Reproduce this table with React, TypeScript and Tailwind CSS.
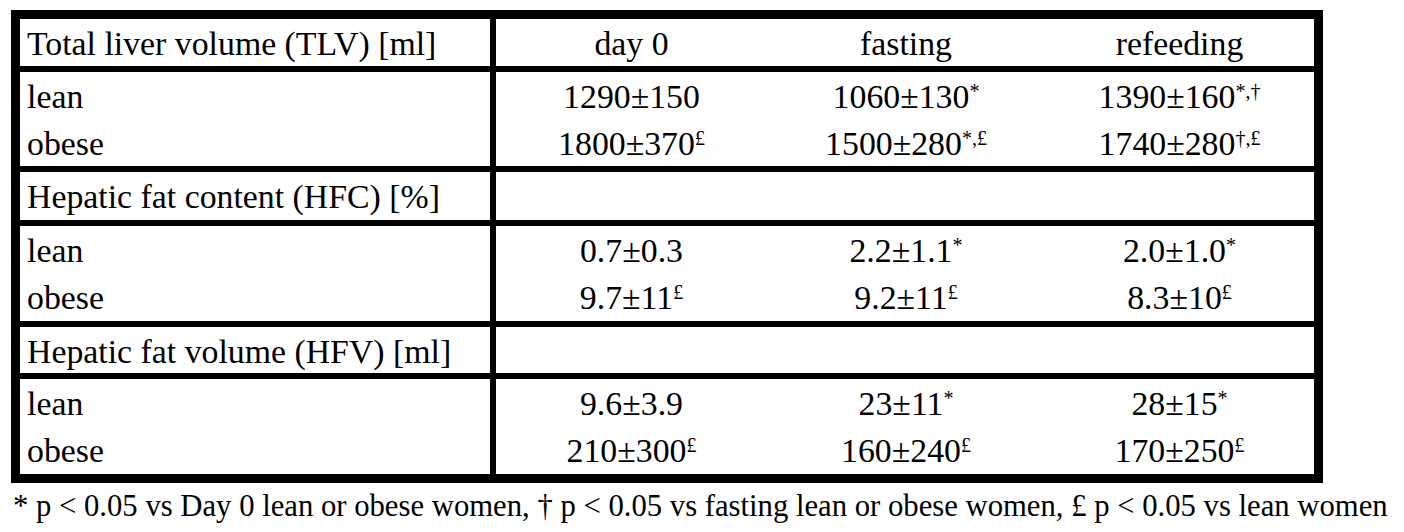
import React from "react";

type Cell = { v: string; s?: string };

const Sup = ({ children }: { children?: React.ReactNode }) =>
  children ? <sup className="text-[20px] top-[-10px]">{children}</sup> : null;

const DataCells = ({ cells }: { cells: Cell[] }) => (
  <div className="grid grid-cols-[271px_278px_269px]">
    {cells.map((c, i) => (
      <div key={i} className="text-center whitespace-nowrap">
        {c.v}
        <Sup>{c.s}</Sup>
      </div>
    ))}
  </div>
);

const Block = ({ lean, obese }: { lean: Cell[]; obese: Cell[] }) => (
  <div className="flex h-[95px] border-t-[6px] border-black box-content">
    <div className="w-[470px] pl-[7px] pt-[1px]">
      <div>lean</div>
      <div>obese</div>
    </div>
    <div className="w-[6px] bg-black" />
    <div className="pt-[1px]">
      <DataCells cells={lean} />
      <DataCells cells={obese} />
    </div>
  </div>
);

const Header = ({ label, h }: { label: string; h: string }) => (
  <div className={`flex border-t-[6px] border-black box-content ${h}`}>
    <div className="w-[470px] pl-[7px] pt-[1px] whitespace-nowrap">{label}</div>
    <div className="w-[6px] bg-black" />
    <div />
  </div>
);

export default function App() {
  return (
    <div
      className="bg-white w-[1404px] h-[532px] text-black overflow-hidden"
      style={{ fontFamily: '"Liberation Serif", "Times New Roman", serif' }}
    >
      <div className="pt-[10px] pl-[11px] text-[33.8px] leading-[47px]">
        <div className="w-[1312px] border-[9px] border-black flex flex-col">
          <div className="flex h-[47px]">
            <div className="w-[470px] pl-[7px] pt-[1px] whitespace-nowrap">
              Total liver volume (TLV) [ml]
            </div>
            <div className="w-[6px] bg-black" />
            <div className="pt-[1px]">
              <DataCells
                cells={[{ v: "day 0" }, { v: "fasting" }, { v: "refeeding" }]}
              />
            </div>
          </div>
          <div className="flex h-[94px] border-t-[6px] border-black box-content">
            <div className="w-[470px] pl-[7px] pt-[1px]">
              <div>lean</div>
              <div>obese</div>
            </div>
            <div className="w-[6px] bg-black" />
            <div className="pt-[1px]">
              <DataCells
                cells={[
                  { v: "1290±150" },
                  { v: "1060±130", s: "*" },
                  { v: "1390±160", s: "*,†" },
                ]}
              />
              <DataCells
                cells={[
                  { v: "1800±370", s: "£" },
                  { v: "1500±280", s: "*,£" },
                  { v: "1740±280", s: "†,£" },
                ]}
              />
            </div>
          </div>
          <Header label="Hepatic fat content (HFC) [%]" h="h-[48px]" />
          <Block
            lean={[
              { v: "0.7±0.3" },
              { v: "2.2±1.1", s: "*" },
              { v: "2.0±1.0", s: "*" },
            ]}
            obese={[
              { v: "9.7±11", s: "£" },
              { v: "9.2±11", s: "£" },
              { v: "8.3±10", s: "£" },
            ]}
          />
          <Header label="Hepatic fat volume (HFV) [ml]" h="h-[46px]" />
          <Block
            lean={[
              { v: "9.6±3.9" },
              { v: "23±11", s: "*" },
              { v: "28±15", s: "*" },
            ]}
            obese={[
              { v: "210±300", s: "£" },
              { v: "160±240", s: "£" },
              { v: "170±250", s: "£" },
            ]}
          />
        </div>
      </div>
      <div className="pl-[13px] pt-[3px] text-[30.7px] leading-[40px] whitespace-nowrap">
        * p &lt; 0.05 vs Day 0 lean or obese women, † p &lt; 0.05 vs fasting
        lean or obese women, £ p &lt; 0.05 vs lean women
      </div>
    </div>
  );
}
